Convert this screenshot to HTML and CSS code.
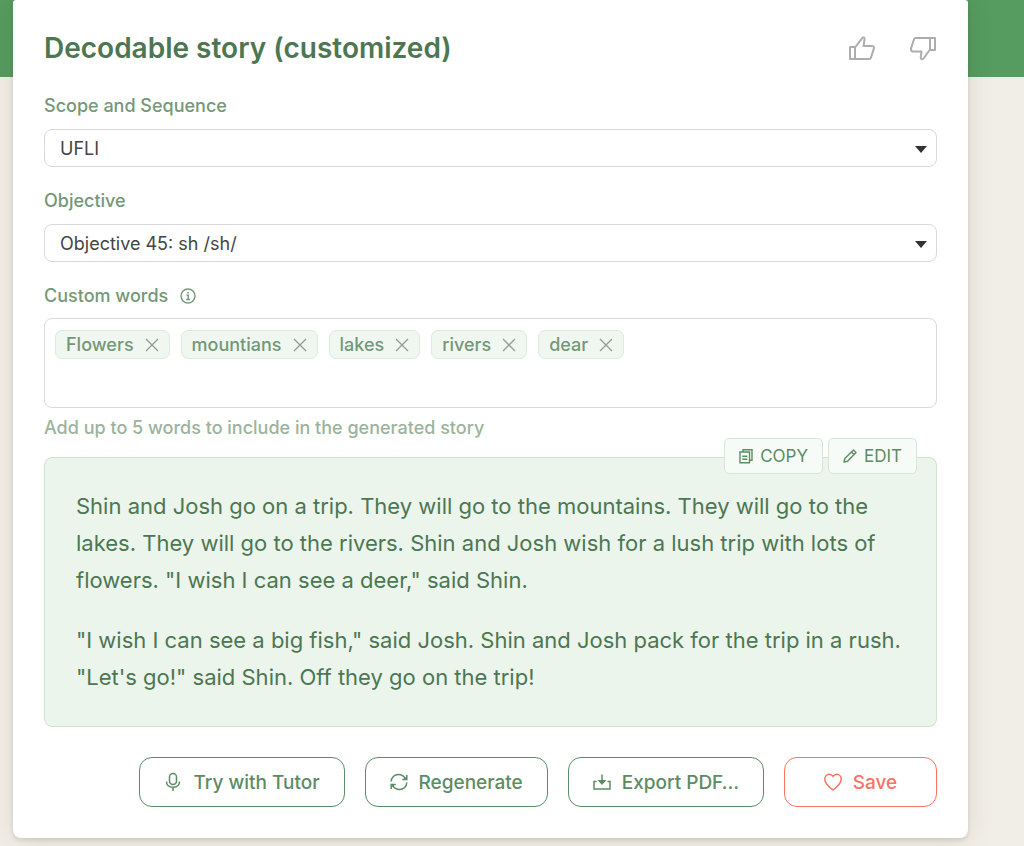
FILE: index.html
```
<!DOCTYPE html>
<html lang="en">
<head>
    <meta charset="UTF-8">
    <meta name="viewport" content="width=device-width, initial-scale=1.0">
    <title>Decodable story</title>
    <link rel="stylesheet" href="styles.css">
</head>
<body>
    <header class="page-header"></header>

    <main class="card">
        <div class="card-head">
            <h1>Decodable story (customized)</h1>
            <div class="feedback">
                <button type="button" class="icon-btn" aria-label="Good story">
                    <svg width="28" height="26" viewBox="0 0 28 26" fill="none" stroke="currentColor" stroke-width="2" stroke-linejoin="round">
                        <path d="M2 12h5v12H2zM7 12.500l7-9.200c1-1.500 2.800-.8 2.600.8L15.500 11H24c1.500 0 2.300 1 1.900 2.400l-3 9.300c-.3.900-.8 1.300-1.700 1.300H7"/>
                    </svg>
                </button>
                <button type="button" class="icon-btn" aria-label="Bad story">
                    <svg width="28" height="26" viewBox="0 0 28 26" fill="none" stroke="currentColor" stroke-width="2" stroke-linejoin="round">
                        <path d="M26 15h-5V3h5zM21 14.500l-6.500 9c-1 1.300-3 .5-2.800-1.200L12.500 16.500H4.300c-2 0-2.600-1.300-2.200-3.200L5 4.300C5.300 3.400 5.800 3 6.700 3H21"/>
                    </svg>
                </button>
            </div>
        </div>

        <form>
            <div class="form-group">
                <label for="scope">Scope and Sequence</label>
                <select id="scope">
                    <option>UFLI</option>
                </select>
            </div>

            <div class="form-group">
                <label for="objective">Objective</label>
                <select id="objective">
                    <option>Objective 45: sh /sh/</option>
                </select>
            </div>

            <div class="form-group">
                <div class="label-row">
                    <label for="words">Custom words</label>
                    <svg width="16" height="16" viewBox="0 0 16 16" fill="none" stroke="currentColor" stroke-width="1.400">
                        <circle cx="8" cy="8" r="7"/>
                        <path d="M6.500 7.200h1.700v4.300M6.300 11.500h3.800M7.200 4.700h1.600"/>
                    </svg>
                </div>
                <div class="words-box">
                    <span class="tag">Flowers
                        <button type="button" aria-label="Remove Flowers"><svg width="14" height="14" viewBox="0 0 14 14"><path d="M1 1l12 12M13 1L1 13"/></svg></button>
                    </span>
                    <span class="tag">mountians
                        <button type="button" aria-label="Remove mountians"><svg width="14" height="14" viewBox="0 0 14 14"><path d="M1 1l12 12M13 1L1 13"/></svg></button>
                    </span>
                    <span class="tag">lakes
                        <button type="button" aria-label="Remove lakes"><svg width="14" height="14" viewBox="0 0 14 14"><path d="M1 1l12 12M13 1L1 13"/></svg></button>
                    </span>
                    <span class="tag">rivers
                        <button type="button" aria-label="Remove rivers"><svg width="14" height="14" viewBox="0 0 14 14"><path d="M1 1l12 12M13 1L1 13"/></svg></button>
                    </span>
                    <span class="tag">dear
                        <button type="button" aria-label="Remove dear"><svg width="14" height="14" viewBox="0 0 14 14"><path d="M1 1l12 12M13 1L1 13"/></svg></button>
                    </span>
                    <input type="text" id="words">
                </div>
                <p class="hint">Add up to 5 words to include in the generated story</p>
            </div>
        </form>

        <section class="story">
            <div class="story-tools">
                <button type="button">
                    <svg width="14" height="16" viewBox="0 0 14 16" fill="none" stroke="currentColor" stroke-width="1.400">
                        <path d="M4 3.500V1.700h9v10.600h-2.500M1 4h9.500v10.700H1zM3.300 8.200h5M3.300 11.200h5"/>
                    </svg>
                    COPY
                </button>
                <button type="button">
                    <svg width="14" height="14" viewBox="0 0 14 14" fill="none" stroke="currentColor" stroke-width="1.400" stroke-linejoin="round">
                        <path d="M1 13l.8-3.500L10.500 1 13 3.500 4.500 12.200zM8.500 3l2.500 2.500"/>
                    </svg>
                    EDIT
                </button>
            </div>
            <p>Shin and Josh go on a trip. They will go to the mountains. They will go to the lakes. They will go to the rivers. Shin and Josh wish for a lush trip with lots of flowers. "I wish I can see a deer," said Shin.</p>
            <p>"I wish I can see a big fish," said Josh. Shin and Josh pack for the trip in a rush. "Let's go!" said Shin. Off they go on the trip!</p>
        </section>

        <div class="actions">
            <button type="button" class="btn">
                <svg width="18" height="20" viewBox="0 0 18 20" fill="none" stroke="currentColor" stroke-width="1.500">
                    <rect x="5.500" y="1.500" width="7" height="11" rx="3.500"/>
                    <path d="M2.500 9.500c0 3.600 2.700 5.700 6.500 5.700s6.500-2.100 6.500-5.700M9 15.200V19"/>
                </svg>
                Try with Tutor
            </button>
            <button type="button" class="btn">
                <svg width="18" height="18" viewBox="0 0 18 18" fill="none" stroke="currentColor" stroke-width="1.500">
                    <path d="M1.200 8.500C1.200 4.500 4.500 1.500 8.500 1.500c3.200 0 5.500 1.600 7 4.300M16.800 2v4.500h-4.500M16.800 9.500c0 4-3.300 7-7.300 7-3.200 0-5.500-1.600-7-4.300M1.200 16v-4.500h4.500"/>
                    <path d="M16.800 3v3.500h-3.500zM1.200 15v-3.500h3.500z" fill="currentColor" stroke="none"/>
                </svg>
                Regenerate
            </button>
            <button type="button" class="btn">
                <svg width="18" height="18" viewBox="0 0 18 18" fill="none" stroke="currentColor" stroke-width="1.500">
                    <path d="M3.500 8.500H1V16h16V8.500h-2.500M9 1.500V8"/>
                    <path d="M4.500 7h9L9 12z" fill="currentColor" stroke="none"/>
                </svg>
                Export PDF…
            </button>
            <button type="button" class="btn btn-save">
                <svg width="18" height="18" viewBox="0 0 18 18" fill="none" stroke="currentColor" stroke-width="1.500" stroke-linejoin="round">
                    <path d="M9 17C6 14.800.8 11 .8 6.300.8 3.300 2.800 1.200 5.200 1.200 7 1.200 8.300 2.200 9 3.400c.7-1.200 2-2.200 3.800-2.200 2.400 0 4.400 2.100 4.400 5.100C17.200 11 12 14.800 9 17z"/>
                </svg>
                Save
            </button>
        </div>
    </main>
</body>
</html>
```
FILE: styles.css
```
* {
    margin: 0;
    padding: 0;
    box-sizing: border-box;
}

body {
    background-color: #f1eee7;
    color: #4d7652;
    font-family: Inter, "Open Sans", sans-serif;
    font-size: 18px;
}

button,
input,
select {
    font: inherit;
    color: inherit;
}

button {
    background: none;
    border: none;
    cursor: pointer;
}

svg {
    display: block;
    flex-shrink: 0;
}

.page-header {
    height: 77px;
    background-color: #569b60;
}

.card {
    position: relative;
    margin: -77px 56px 8px 13px;
    padding: 28px 31px 31px;
    background: #fff;
    border-radius: 3px 3px 8px 8px;
    box-shadow: 0 2px 4px rgba(60, 50, 20, 0.14), 0 4px 28px rgba(60, 50, 20, 0.1);
}

.card-head {
    display: flex;
    align-items: center;
    justify-content: space-between;
    margin-bottom: 26px;
}

.card-head h1 {
    font-size: 28px;
    font-weight: 600;
    line-height: 40px;
}

.feedback {
    display: flex;
    gap: 33px;
}

.icon-btn {
    color: #adadad;
}

.form-group {
    margin-bottom: 22px;
}

.form-group:last-child {
    margin-bottom: 17px;
}

.form-group label {
    display: block;
    margin-bottom: 11px;
    color: #749877;
    font-weight: 500;
    line-height: 24px;
}

.form-group select {
    display: block;
    width: 100%;
    height: 38px;
    padding: 0 15px;
    border: 1px solid #d9d9d9;
    border-radius: 8px;
    color: #444;
    appearance: none;
    background: #fff url("data:image/svg+xml,%3Csvg xmlns='http://www.w3.org/2000/svg' viewBox='0 0 12 7'%3E%3Cpath d='M0 0h12L6 7z' fill='%23333'/%3E%3C/svg%3E") no-repeat right 9px top 16px / 12px 7px;
}

.label-row {
    display: flex;
    align-items: center;
    gap: 12px;
    margin-bottom: 10px;
    color: #749877;
}

.form-group .label-row label {
    margin: 0;
}

.words-box {
    display: flex;
    flex-wrap: wrap;
    align-items: flex-start;
    gap: 11px;
    min-height: 90px;
    padding: 11px 10px;
    border: 1px solid #d9d9d9;
    border-radius: 8px;
}

.words-box input {
    flex: 1;
    min-width: 80px;
    height: 29px;
    border: none;
    outline: none;
}

.tag {
    display: flex;
    align-items: center;
    gap: 11px;
    height: 29px;
    padding: 0 10px;
    border: 1px solid #dcebde;
    border-radius: 7px;
    background: #f0f7f1;
    color: #749877;
    font-weight: 500;
}

.tag svg {
    stroke: #999;
    stroke-width: 1.3;
}

.hint {
    margin-top: 8px;
    color: #9bb39d;
    font-weight: 500;
    line-height: 24px;
}

.story {
    position: relative;
    padding: 30px 31px;
    border: 1px solid #cde5d1;
    border-radius: 8px;
    background: #ebf5ec;
    font-size: 22px;
    line-height: 37px;
}

.story p + p {
    margin-top: 23px;
}

.story-tools {
    position: absolute;
    top: -20px;
    right: 19px;
    display: flex;
    gap: 5px;
}

.story-tools button {
    display: flex;
    align-items: center;
    gap: 7px;
    height: 36px;
    padding: 0 14px;
    border: 1px solid #d3e7d7;
    border-radius: 5px;
    background: #f6fbf8;
    color: #5c8c63;
    font-size: 17px;
    line-height: 24px;
}

.actions {
    display: flex;
    justify-content: flex-end;
    gap: 20px;
    margin-top: 30px;
}

.btn {
    display: flex;
    align-items: center;
    justify-content: center;
    gap: 11px;
    min-width: 153px;
    height: 50px;
    padding: 0 24px;
    border: 1px solid #5c8c63;
    border-radius: 13px;
    color: #5c8c63;
    font-size: 19px;
    font-weight: 500;
}

.btn-save {
    border-color: #fa7363;
    color: #fa7363;
}

@media (max-width: 768px) {
    .card {
        margin-right: 13px;
    }

    .actions {
        flex-wrap: wrap;
    }
}
```
